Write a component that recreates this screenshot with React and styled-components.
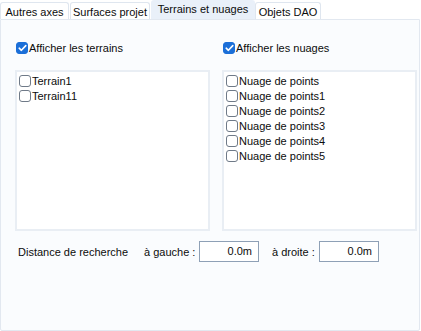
import React from "react";
import styled, { createGlobalStyle } from "styled-components";

const GlobalStyle = createGlobalStyle`
  html, body {
    margin: 0;
    padding: 0;
    background: #ffffff;
  }
  body {
    font-family: "Liberation Sans", Arial, sans-serif;
    font-size: 11px;
    color: #0c0c0c;
  }
`;

const Window = styled.div`
  width: 421px;
  height: 331px;
  display: flex;
  flex-direction: column;
  box-sizing: border-box;
`;

const TabBar = styled.div`
  display: flex;
  height: 19px;
  flex-shrink: 0;
`;

const Tab = styled.div`
  box-sizing: border-box;
  width: ${(p) => p.$w}px;
  margin-top: ${(p) => (p.$active ? 0 : 2)}px;
  padding-top: ${(p) => (p.$active ? 1 : 2)}px;
  text-align: center;
  white-space: nowrap;
  background: ${(p) => (p.$active ? "#e9f0f9" : "#ffffff")};
  border: 1px solid ${(p) => (p.$active ? "#e9f0f9" : "#dfe6ef")};
  border-bottom: none;
  border-radius: 3px 3px 0 0;
  margin-right: ${(p) => (p.$active ? 0 : 1)}px;
  line-height: 14px;
`;

const Panel = styled.div`
  flex: 1;
  margin-right: 1px;
  border: 1px solid #e2e8f0;
  background: #fafcfe;
  border-radius: 0 0 2px 2px;
  padding: 21px 4px 0 14px;
  display: flex;
  flex-direction: column;
`;

const Columns = styled.div`
  display: grid;
  grid-template-columns: 195px 195px;
  column-gap: 12px;
`;

const Column = styled.div`
  display: flex;
  flex-direction: column;
`;

const Row = styled.label`
  display: flex;
  align-items: center;
  gap: 1px;
  height: ${(p) => p.$h || 15}px;
  padding-left: ${(p) => p.$indent || 0}px;
  white-space: nowrap;
`;

const Box = styled.span`
  box-sizing: border-box;
  width: 12px;
  height: 12px;
  border-radius: 3px;
  border: 1px solid ${(p) => (p.$checked ? "#1b6fd8" : "#6f7a88")};
  background: ${(p) => (p.$checked ? "#1b6fd8" : "#ffffff")};
  display: inline-flex;
  align-items: center;
  justify-content: center;
  flex-shrink: 0;
`;

const ListBox = styled.div`
  margin-top: 15px;
  height: 161px;
  box-sizing: border-box;
  border: 2px solid #e9eef4;
  background: #ffffff;
  padding: 1px 2px;
`;

const BottomRow = styled.div`
  display: flex;
  align-items: center;
  margin-top: 10px;
  padding-left: 3px;
  height: 21px;
`;

const DistanceLabel = styled.span`
  width: 126px;
  white-space: nowrap;
`;

const SideLabel = styled.span`
  white-space: nowrap;
  margin-left: ${(p) => p.$ml || 0}px;
  width: ${(p) => p.$w}px;
`;

const Field = styled.div`
  box-sizing: border-box;
  width: 60px;
  height: 21px;
  border: 1px solid #8ea0b6;
  background: #ffffff;
  text-align: right;
  padding-right: 6px;
  line-height: 19px;
`;

const Check = ({ checked }) => (
  <Box $checked={checked}>
    {checked && (
      <svg width="9" height="8" viewBox="0 0 9 8">
        <path
          d="M1.2 4.2 L3.4 6.3 L7.8 1.6"
          fill="none"
          stroke="#ffffff"
          strokeWidth="1.6"
          strokeLinecap="round"
          strokeLinejoin="round"
        />
      </svg>
    )}
  </Box>
);

const tabs = [
  { label: "Autres axes", w: 69 },
  { label: "Surfaces projet", w: 80 },
  { label: "Terrains et nuages", w: 104, active: true },
  { label: "Objets DAO", w: 66 },
];

const terrains = ["Terrain1", "Terrain11"];
const nuages = [
  "Nuage de points",
  "Nuage de points1",
  "Nuage de points2",
  "Nuage de points3",
  "Nuage de points4",
  "Nuage de points5",
];

export default function App() {
  return (
    <Window>
      <GlobalStyle />
      <TabBar>
        {tabs.map((t) => (
          <Tab key={t.label} $w={t.w} $active={t.active}>
            {t.label}
          </Tab>
        ))}
      </TabBar>
      <Panel>
        <Columns>
          <Column>
            <Row $h={14} $indent={1}>
              <Check checked />
              Afficher les terrains
            </Row>
            <ListBox>
              {terrains.map((n) => (
                <Row key={n}>
                  <Check />
                  {n}
                </Row>
              ))}
            </ListBox>
          </Column>
          <Column>
            <Row $h={14} $indent={1}>
              <Check checked />
              Afficher les nuages
            </Row>
            <ListBox>
              {nuages.map((n) => (
                <Row key={n}>
                  <Check />
                  {n}
                </Row>
              ))}
            </ListBox>
          </Column>
        </Columns>
        <BottomRow>
          <DistanceLabel>Distance de recherche</DistanceLabel>
          <SideLabel $w={55}>à gauche :</SideLabel>
          <Field>0.0m</Field>
          <SideLabel $ml={13} $w={47}>à droite :</SideLabel>
          <Field>0.0m</Field>
        </BottomRow>
      </Panel>
    </Window>
  );
}
